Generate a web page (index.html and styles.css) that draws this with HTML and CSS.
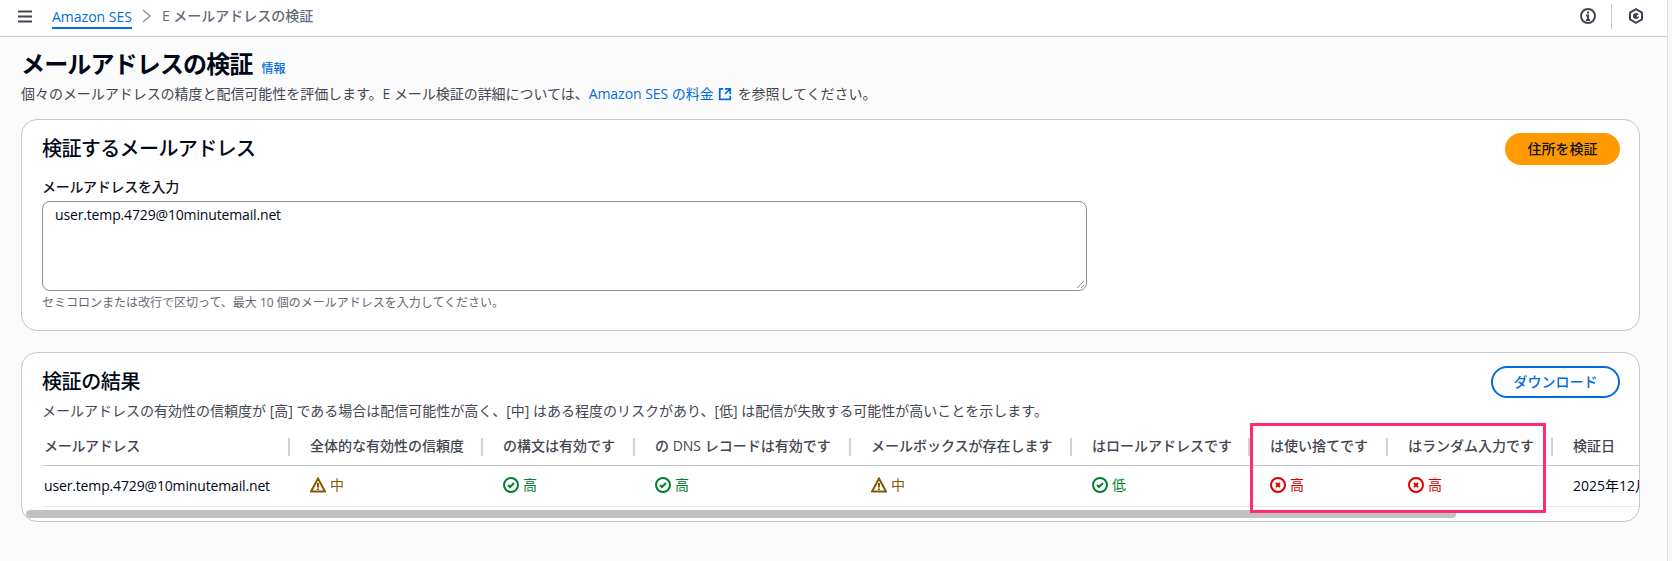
FILE: index.html
```html
<!DOCTYPE html>
<html lang="ja">
<head>
<meta charset="utf-8">
<title>メールアドレスの検証</title>
<link rel="stylesheet" href="styles.css">
</head>
<body>
<div class="app">
  <div class="content">
    <header class="topbar">
      <svg class="menu" viewBox="0 0 14 13"><path d="M0 1.5h14M0 6.5h14M0 11.5h14"/></svg>
      <a class="crumb-link">Amazon SES</a>
      <svg class="chev" viewBox="0 0 9 14"><path d="m1 1 7 6-7 6"/></svg>
      <span class="crumb-here">E メールアドレスの検証</span>
      <span class="top-tools">
        <svg class="tool" viewBox="0 0 16 16"><circle cx="8" cy="8" r="7"/><path d="M6 7.5h2V12M6 12h4"/><path class="solid" d="M7 3.5h2v2H7z"/></svg>
        <span class="tool-sep"></span>
        <svg class="tool" viewBox="0 0 16 16"><path d="M8 1.2 14 4.6v6.8l-6 3.4-6-3.4V4.6z"/><circle class="solid" cx="8" cy="8" r="3"/><path class="cut" d="M9 8.2 13 6.4"/></svg>
      </span>
    </header>

    <main class="page">
      <div class="title-row">
        <h1>メールアドレスの検証</h1>
        <a class="info-link">情報</a>
      </div>
      <p class="lead">個々のメールアドレスの精度と配信可能性を評価します。E メール検証の詳細については、<a class="link">Amazon SES の料金<svg class="ext" viewBox="0 0 16 16"><path d="M14 8V2H8M14 2 8 8M6 2H2v12h12v-4"/></svg></a>を参照してください。</p>

      <section class="card card-form">
        <div class="card-head">
          <h2>検証するメールアドレス</h2>
          <button class="btn btn-primary">住所を検証</button>
        </div>
        <label class="field-label">メールアドレスを入力</label>
        <div class="textarea"><span class="mail">user.temp.4729@10minutemail.net</span><svg class="grip" viewBox="0 0 10 10"><path d="M9 2 2 9M9 6 6 9"/></svg></div>
        <p class="hint">セミコロンまたは改行で区切って、最大 10 個のメールアドレスを入力してください。</p>
      </section>

      <section class="card card-results">
        <div class="card-head results-head">
          <h2 class="tight">検証の結果</h2>
          <button class="btn btn-normal">ダウンロード</button>
        </div>
        <p class="desc">メールアドレスの有効性の信頼度が [高] である場合は配信可能性が高く、[中] はある程度のリスクがあり、[低] は配信が失敗する可能性が高いことを示します。</p>
        <div class="table-wrap">
          <table>
            <colgroup>
              <col class="c1"><col class="c2"><col class="c3"><col class="c4"><col class="c5"><col class="c6"><col class="c7"><col class="c8"><col class="c9">
            </colgroup>
            <thead>
              <tr>
                <th class="first">メールアドレス</th>
                <th>全体的な有効性の信頼度</th>
                <th>の構文は有効です</th>
                <th>の DNS レコードは有効です</th>
                <th>メールボックスが存在します</th>
                <th>はロールアドレスです</th>
                <th>は使い捨てです</th>
                <th>はランダム入力です</th>
                <th>検証日</th>
              </tr>
            </thead>
            <tbody>
              <tr>
                <td class="first"><span class="mail">user.temp.4729@10minutemail.net</span></td>
                <td><span class="st warn"><svg viewBox="0 0 16 16"><path d="M8 1.5 15 14.5H1z"/><path d="M8 6v4.5M8 11.5v1.5"/></svg>中</span></td>
                <td><span class="st ok"><svg viewBox="0 0 16 16"><circle cx="8" cy="8" r="7"/><path d="m5 8 2 2 4-4"/></svg>高</span></td>
                <td><span class="st ok"><svg viewBox="0 0 16 16"><circle cx="8" cy="8" r="7"/><path d="m5 8 2 2 4-4"/></svg>高</span></td>
                <td><span class="st warn"><svg viewBox="0 0 16 16"><path d="M8 1.5 15 14.5H1z"/><path d="M8 6v4.5M8 11.5v1.5"/></svg>中</span></td>
                <td><span class="st ok"><svg viewBox="0 0 16 16"><circle cx="8" cy="8" r="7"/><path d="m5 8 2 2 4-4"/></svg>低</span></td>
                <td><span class="st bad"><svg viewBox="0 0 16 16"><circle cx="8" cy="8" r="7"/><path d="m6 6 4 4M10 6l-4 4"/></svg>高</span></td>
                <td><span class="st bad"><svg viewBox="0 0 16 16"><circle cx="8" cy="8" r="7"/><path d="m6 6 4 4M10 6l-4 4"/></svg>高</span></td>
                <td>2025年12月1日</td>
              </tr>
            </tbody>
          </table>
        </div>
        <div class="scroll-track"><div class="scroll-thumb"></div></div>
        <div class="highlight"></div>
      </section>
    </main>
  </div>
  <div class="strip"></div>
</div>
</body>
</html>
```

FILE: styles.css
```css
* { box-sizing: border-box; }
html, body { margin: 0; height: 100%; overflow: hidden; }
body {
  font-family: "Open Sans", "Noto Sans CJK JP", sans-serif;
  font-size: 14px;
  line-height: 20px;
  color: #000716;
  background: #fbfbfc;
}
.app { display: flex; height: 561px; }
.content { flex: 1; min-width: 0; }
.strip { width: 5px; background: #f7f7f8; border-left: 1px solid #dcdde1; }

.topbar {
  height: 37px;
  display: flex;
  align-items: center;
  background: #fff;
  border-bottom: 1px solid #c6c6cd;
  padding: 0 0 4px 18px;
}
.menu { width: 14px; height: 13px; fill: none; stroke: #424650; stroke-width: 2; }
.crumb-link {
  margin-left: 20px;
  color: #006ce0;
  border-bottom: 2px solid #006ce0;
  height: 22px;
  line-height: 20px;
  margin-top: 3px;
}
.chev { width: 9px; height: 14px; margin-left: 10px; fill: none; stroke: #8c8c94; stroke-width: 1.4; }
.crumb-here { margin-left: 11px; color: #5f6b7a; font-weight: 500; }
.top-tools { margin-left: auto; display: flex; align-items: center; padding-right: 23px; }
.tool { width: 16px; height: 16px; fill: none; stroke: #424650; stroke-width: 2; }
.tool .solid { fill: #424650; stroke: none; }
.tool .cut { stroke: #fff; stroke-width: 1.6; }
.tool-sep { width: 1px; height: 25px; background: #c6c6cd; margin: 0 16px 0 15px; }

.page { padding: 0 27px 0 21px; }
.title-row { display: flex; align-items: baseline; padding-top: 11px; height: 47px; }
h1 { margin: 0; font-size: 24px; line-height: 32px; font-weight: 700; letter-spacing: -0.85px; }
.info-link { margin-left: 9px; font-size: 12px; font-weight: 500; color: #006ce0; }
.lead { margin: 0; color: #424650; line-height: 20px; letter-spacing: -0.04px; }
.link { color: #006ce0; }
.ext { width: 14px; height: 14px; margin: 0 6px 0 4px; vertical-align: -2px; fill: none; stroke: #006ce0; stroke-width: 2; }
.mail { letter-spacing: -0.15px; }

.card {
  position: relative;
  background: #fff;
  border: 1px solid #c6c6cd;
  border-radius: 16px;
  width: 1619px;
}
.card-form { height: 212px; margin-top: 15px; padding: 13px 19px 0 20px; }
.card-results { height: 170px; margin-top: 21px; padding: 13px 0 0 20px; overflow: hidden; }
.card-head { display: flex; justify-content: space-between; align-items: center; height: 32px; }
.results-head { padding-right: 19px; }
h2 { margin: 0; font-size: 20px; line-height: 28px; font-weight: 500; letter-spacing: -0.6px; }
h2.tight { letter-spacing: -0.4px; }
.btn {
  font: inherit;
  font-weight: 500;
  height: 32px;
  border-radius: 20px;
  padding: 0;
}
.btn-primary { width: 115px; background: #ff9900; border: 0; color: #0f141a; }
.btn-normal { width: 129px; background: #fff; border: 2px solid #006ce0; color: #006ce0; }
.field-label { display: block; margin-top: 12px; font-weight: 500; color: #0f141a; letter-spacing: -0.3px; }
.textarea {
  position: relative;
  margin-top: 4px;
  width: 1045px;
  height: 90px;
  padding: 3px 12px;
  border: 1px solid #8c8c94;
  border-radius: 8px;
}
.grip { position: absolute; right: 1px; bottom: 1px; width: 10px; height: 10px; fill: none; stroke: #8c8c94; stroke-width: 1; }
.hint { margin: 2px 0 0; font-size: 12px; line-height: 20px; color: #656871; }

.desc { margin: 3px 0 0; font-size: 14px; color: #424650; }
.table-wrap { margin-top: 8px; overflow: hidden; }
table { width: 1660px; table-layout: fixed; border-collapse: separate; border-spacing: 0; }
.c1 { width: 248px; }
.c2 { width: 193px; }
.c3 { width: 152px; }
.c4 { width: 216px; }
.c5 { width: 221px; }
.c6 { width: 178px; }
.c7 { width: 138px; }
.c8 { width: 165px; }
.c9 { width: 149px; }
th {
  position: relative;
  height: 37px;
  padding: 0 0 2px 20px;
  text-align: left;
  font-weight: 500;
  color: #424650;
  white-space: nowrap;
  border-bottom: 1px solid #c6c6cd;
}
th.first { letter-spacing: -0.3px; }
th.first, td.first { padding-left: 2px; }
th:not(:last-child)::after {
  content: "";
  position: absolute;
  right: 0;
  top: 9px;
  height: 18px;
  width: 2px;
  background: #d1d1d6;
}
td {
  height: 41px;
  padding: 0 0 0 20px;
  white-space: nowrap;
  border-bottom: 1px solid #e8e8ea;
}
.st { display: inline-flex; align-items: center; gap: 4px; }
.st svg { width: 16px; height: 16px; fill: none; stroke: currentColor; stroke-width: 2; }
.warn { color: #855900; }
.ok { color: #00802f; }
.bad { color: #db0000; }

.scroll-track { height: 13px; margin-left: -20px; padding: 3px 0 0 4px; }
.scroll-thumb { width: 1430px; height: 8px; background: #c2c2c2; border-radius: 4px; }

.highlight {
  position: absolute;
  left: 1228px;
  top: 70px;
  width: 296px;
  height: 90px;
  border: 3px solid #ff2d6c;
}
```
